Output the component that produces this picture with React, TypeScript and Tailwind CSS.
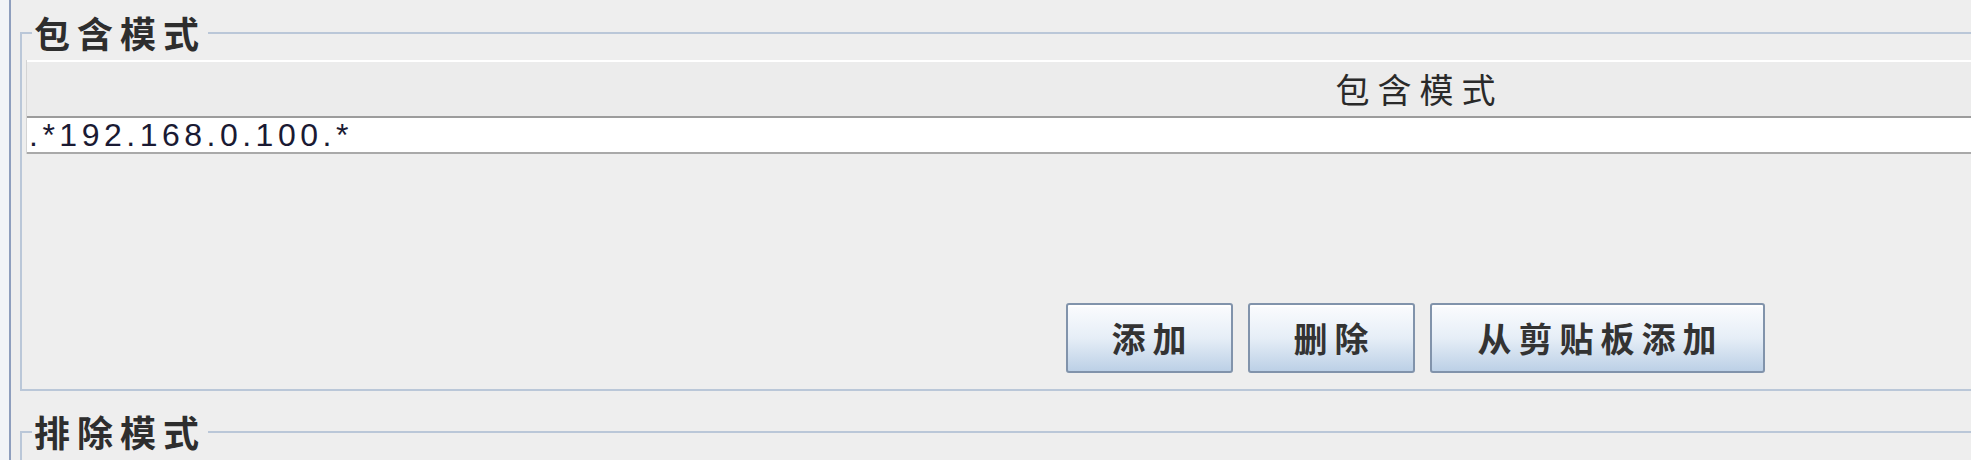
import React from "react";

const cjk = "font-['Noto_Sans_CJK_SC','Noto_Sans',sans-serif]";

function GroupTitle({ text }: { text: string }) {
  return (
    <div
      className={`absolute left-[10px] top-[-20px] bg-[#eeeeee] px-[2px] text-[36px] leading-[37px] tracking-[7px] font-bold text-[#2e2e2e] ${cjk}`}
    >
      {text}
    </div>
  );
}

function JButton({ label, w }: { label: string; w: string }) {
  return (
    <button
      className={`${w} h-[70px] rounded-[3px] border-2 border-[#8193ab] bg-gradient-to-b from-[#fbfcfe] via-[#e6eef7] to-[#bcd0e6] text-[34px] leading-none tracking-[7px] pl-[7px] font-bold text-[#333333] shadow-[inset_0_2px_0_#ffffff] ${cjk}`}
    >
      {label}
    </button>
  );
}

export default function App() {
  return (
    <div className="w-[1971px] h-[460px] bg-[#eeeeee] flex overflow-hidden">
      <div className="w-[9px] shrink-0 bg-[#f2f4f7]" />
      <div className="w-[2px] shrink-0 bg-[#8e9ebd]" />
      <div className="pl-[9px] flex flex-col shrink-0">
        {/* Include group */}
        <div className="relative shrink-0 mt-[32px] w-[2790px] h-[359px] border-l-2 border-t-2 border-b-2 border-[#bac7d8] flex flex-col pl-[4px]">
          <GroupTitle text="包含模式" />
          <div className="mt-[26px] w-[2778px] flex flex-col border-l border-[#d4d4d4]">
            <div className="h-[58px] bg-[#ececec] border-t-2 border-white border-b-2 border-b-[#9c9c9c] flex items-center justify-center">
              <span
                className={`text-[34px] leading-none tracking-[8px] pl-[8px] text-[#2a2a2a] ${cjk}`}
              >
                包含模式
              </span>
            </div>
            <div className="h-[36px] bg-white border-b-2 border-[#a9a9a9] flex items-center pl-[2px]">
              <span className="font-['Liberation_Sans',Arial,sans-serif] text-[32px] leading-none tracking-[4.5px] text-[#1a1a33]">
                .*192.168.0.100.*
              </span>
            </div>
          </div>
          <div className="mt-[149px] flex justify-center gap-[15px] w-[2778px]">
            <JButton label="添加" w="w-[167px]" />
            <JButton label="删除" w="w-[167px]" />
            <JButton label="从剪贴板添加" w="w-[335px]" />
          </div>
        </div>
        {/* Exclude group */}
        <div className="relative shrink-0 mt-[40px] w-[2790px] h-[200px] border-l-2 border-t-2 border-[#bac7d8]">
          <GroupTitle text="排除模式" />
        </div>
      </div>
    </div>
  );
}
